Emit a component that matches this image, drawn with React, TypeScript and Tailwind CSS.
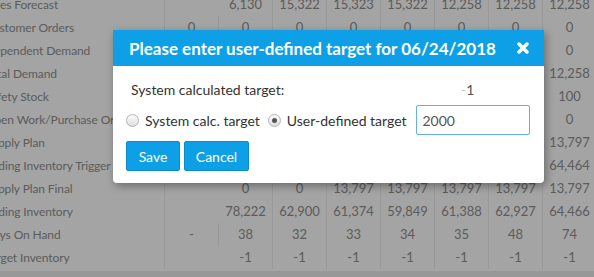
import React from 'react'

const rows: { label: string; values: string[] }[] = [
  { label: 'Sales Forecast', values: ['', '6,130', '15,322', '15,323', '15,322', '12,258', '12,258', '12,258'] },
  { label: 'Customer Orders', values: ['0', '0', '0', '0', '0', '0', '0', '0'] },
  { label: 'Dependent Demand', values: ['0', '0', '0', '0', '0', '0', '0', '0'] },
  { label: 'Total Demand', values: ['', '6,130', '15,322', '15,323', '15,322', '12,258', '12,258', '12,258'] },
  { label: 'Safety Stock', values: ['', '100', '100', '100', '100', '100', '100', '100'] },
  { label: 'Open Work/Purchase Orders', values: ['', '0', '0', '0', '0', '0', '0', '0'] },
  { label: 'Supply Plan', values: ['', '0', '0', '13,797', '13,797', '13,797', '13,797', '13,797'] },
  { label: 'Ending Inventory Trigger', values: ['', '78,222', '62,900', '61,374', '59,849', '61,388', '62,927', '64,464'] },
  { label: 'Supply Plan Final', values: ['', '0', '0', '13,797', '13,797', '13,797', '13,797', '13,797'] },
  { label: 'Ending Inventory', values: ['', '78,222', '62,900', '61,374', '59,849', '61,388', '62,927', '64,466'] },
  { label: 'Days On Hand', values: ['-', '38', '32', '33', '34', '35', '48', '74'] },
  { label: 'Target Inventory', values: ['', '-1', '-1', '-1', '-1', '-1', '-1', '-1'] }
]

function Radio({ checked }: { checked?: boolean }) {
  return (
    <span className="flex h-[13px] w-[13px] shrink-0 items-center justify-center rounded-full border border-[#b3b3b3] bg-gradient-to-b from-[#fdfdfd] to-[#dedede]">
      {checked && <span className="h-[5px] w-[5px] rounded-full bg-[#555]" />}
    </span>
  )
}

export default function App() {
  return (
    <div className="relative h-[277px] w-[594px] overflow-hidden bg-white font-['Lato',sans-serif]">
      <div className="-mt-[7px] text-[13px] text-[#8f8f8f]">
        {rows.map((row) => (
          <div key={row.label} className="flex h-[23px] items-center">
            <div className="w-[165px] shrink-0 overflow-hidden whitespace-nowrap border-r border-[#ececec] text-[12px] leading-[23px] tracking-[-0.1px]">
              <span className="-ml-[15px] inline-block">{row.label}</span>
            </div>
            {row.values.map((v, i) => (
              <div key={i} className="w-[54px] shrink-0 border-r border-[#ececec] text-center leading-[23px]">
                {v}
              </div>
            ))}
          </div>
        ))}
        <div className="mt-[2px] h-[20px] bg-[#ececec]" />
      </div>

      <div className="absolute inset-0 bg-black/[0.357]" />

      <div className="absolute left-[113px] top-[30px] w-[431px] rounded-b-[4px] bg-white shadow-[2px_3px_8px_rgba(0,0,0,0.35)]">
        <div className="flex h-[36px] items-center justify-between bg-[#0ea0e6] pl-[16px] pr-[15px] text-white">
          <h3 className="whitespace-nowrap text-[17px] font-bold leading-none">Please enter user-defined target for 06/24/2018</h3>
          <svg width="12" height="12" viewBox="0 0 12 12">
            <path d="M2 2 L10 10 M10 2 L2 10" stroke="white" strokeWidth="3.4" strokeLinecap="round" />
          </svg>
        </div>
        <div className="px-[13px] pb-[12px] pt-[14px] text-[14px] text-[#333]">
          <div className="flex h-[18px] items-center whitespace-nowrap pl-[5px]">
            <span className="w-[330px]">System calculated target:</span>
            <span className="text-[#555]">
              <span className="text-[#c8c8c8]">-</span>1
            </span>
          </div>
          <div className="mt-[7px] flex items-center whitespace-nowrap">
            <Radio />
            <span className="ml-[6px]">System calc. target</span>
            <span className="ml-[8px]">
              <Radio checked />
            </span>
            <span className="ml-[6px]">User-defined target</span>
            <input
              readOnly
              value="2000"
              className="ml-[9px] h-[30px] w-[114px] rounded-[2px] border border-[#66afe9] px-[6px] text-[14px] text-[#555] outline-none"
            />
          </div>
          <div className="mt-[6px] flex gap-[4px]">
            <button className="h-[30px] w-[54px] rounded-[2px] border border-[#0b8dcc] bg-[#0ea0e6] text-[14px] text-white">Save</button>
            <button className="h-[30px] w-[65px] rounded-[2px] border border-[#0b8dcc] bg-[#0ea0e6] text-[14px] text-white">Cancel</button>
          </div>
        </div>
      </div>
    </div>
  )
}
